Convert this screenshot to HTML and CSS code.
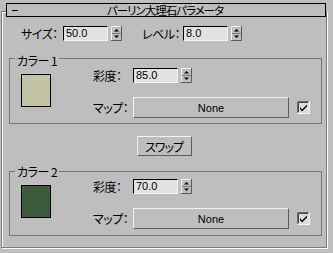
FILE: index.html
```html
<!DOCTYPE html>
<html lang="ja">
<head>
<meta charset="utf-8">
<link rel="stylesheet" href="styles.css">
</head>
<body>
<div class="frame">
  <div class="title"><span class="minus"></span><span class="title-text">パーリン大理石パラメータ</span><span class="spacer"></span></div>
  <div class="top-row">
    <span class="lbl lbl-size">サイズ：</span>
    <div class="num">50.0</div>
    <svg class="spin" viewBox="0 0 11 15" width="11" height="15"><path d="M0.5 14V0.5H10" stroke="#f4f4f4" fill="none"/><path d="M10.5 0V14.5H0" stroke="#5a5a5a" fill="none"/><path d="M1 7.5H10" stroke="#7a7a7a"/><path d="M3 5.5L5.5 3L8 5.5Z" fill="#000"/><path d="M3 9.5H8L5.5 12Z" fill="#000"/></svg>
    <span class="lbl lbl-level">レベル：</span>
    <div class="num">8.0</div>
    <svg class="spin" viewBox="0 0 11 15" width="11" height="15"><path d="M0.5 14V0.5H10" stroke="#f4f4f4" fill="none"/><path d="M10.5 0V14.5H0" stroke="#5a5a5a" fill="none"/><path d="M1 7.5H10" stroke="#7a7a7a"/><path d="M3 5.5L5.5 3L8 5.5Z" fill="#000"/><path d="M3 9.5H8L5.5 12Z" fill="#000"/></svg>
  </div>

  <div class="group group-1">
    <div class="legend">カラー 1</div>
    <div class="group-body">
      <div class="swatch swatch-1"></div>
      <div class="controls">
        <div class="row">
          <span class="lbl lbl-field">彩度：</span>
          <div class="num">85.0</div>
          <svg class="spin" viewBox="0 0 11 15" width="11" height="15"><path d="M0.5 14V0.5H10" stroke="#f4f4f4" fill="none"/><path d="M10.5 0V14.5H0" stroke="#5a5a5a" fill="none"/><path d="M1 7.5H10" stroke="#7a7a7a"/><path d="M3 5.5L5.5 3L8 5.5Z" fill="#000"/><path d="M3 9.5H8L5.5 12Z" fill="#000"/></svg>
        </div>
        <div class="row map-row">
          <span class="lbl lbl-field">マップ：</span>
          <button class="map-btn">None</button>
          <svg class="check" viewBox="0 0 13 13" width="13" height="13"><rect x="0" y="0" width="13" height="13" fill="#dcdcdc"/><path d="M0.5 12V0.5H12" stroke="#6a6a6a" fill="none"/><path d="M12.5 0V12.5H0" stroke="#f4f4f4" fill="none"/><path d="M1.5 11V1.5H11" stroke="#404040" fill="none"/><path d="M3 6L5 8.5L10 3.5V5.5L5 10.5L3 8Z" fill="#000"/></svg>
        </div>
      </div>
    </div>
  </div>

  <div class="swap-wrap"><button class="swap">スワップ</button></div>

  <div class="group group-2">
    <div class="legend">カラー 2</div>
    <div class="group-body">
      <div class="swatch swatch-2"></div>
      <div class="controls">
        <div class="row">
          <span class="lbl lbl-field">彩度：</span>
          <div class="num">70.0</div>
          <svg class="spin" viewBox="0 0 11 15" width="11" height="15"><path d="M0.5 14V0.5H10" stroke="#f4f4f4" fill="none"/><path d="M10.5 0V14.5H0" stroke="#5a5a5a" fill="none"/><path d="M1 7.5H10" stroke="#7a7a7a"/><path d="M3 5.5L5.5 3L8 5.5Z" fill="#000"/><path d="M3 9.5H8L5.5 12Z" fill="#000"/></svg>
        </div>
        <div class="row map-row">
          <span class="lbl lbl-field">マップ：</span>
          <button class="map-btn">None</button>
          <svg class="check" viewBox="0 0 13 13" width="13" height="13"><rect x="0" y="0" width="13" height="13" fill="#dcdcdc"/><path d="M0.5 12V0.5H12" stroke="#6a6a6a" fill="none"/><path d="M12.5 0V12.5H0" stroke="#f4f4f4" fill="none"/><path d="M1.5 11V1.5H11" stroke="#404040" fill="none"/><path d="M3 6L5 8.5L10 3.5V5.5L5 10.5L3 8Z" fill="#000"/></svg>
        </div>
      </div>
    </div>
  </div>
</div>
</body>
</html>
```
FILE: styles.css
```css
html, body {
  margin: 0;
  padding: 0;
  background: #bebebe;
}
body {
  width: 333px;
  height: 253px;
  overflow: hidden;
  font-family: "Liberation Sans", "Noto Sans CJK JP", sans-serif;
  font-size: 11px;
  color: #000;
}
.frame {
  margin: 11px 0 0 1px;
  width: 324px;
  height: 235px;
  border: 1px solid #7b7b7b;
  box-shadow: 1px 1px 0 #fbfbfb, inset 1px 1px 0 #fbfbfb;
}
.title {
  margin: -9px 0 0 4px;
  width: 318px;
  height: 12px;
  border: 1px solid #000;
  background: #bebebe;
  display: flex;
  align-items: center;
}
.minus {
  width: 6px;
  height: 1px;
  background: #000;
  margin-left: 5px;
}
.spacer {
  width: 13px;
}
.title-text {
  flex: 1;
  text-align: center;
  font-family: "Noto Sans CJK JP", sans-serif;
  font-size: 11.5px;
  letter-spacing: -1px;
  line-height: 12px;
  font-feature-settings: "palt";
}
.top-row {
  display: flex;
  align-items: center;
  height: 15px;
  margin-top: 9px;
  padding-left: 19px;
}
.lbl {
  font-family: "Noto Sans CJK JP", sans-serif;
  font-size: 12px;
  letter-spacing: -0.5px;
  line-height: 15px;
  font-feature-settings: "palt";
  white-space: nowrap;
}
.lbl-size { width: 42px; }
.lbl-level { width: 41px; margin-left: 20px; }
.lbl-field { width: 40px; }
.num {
  box-sizing: border-box;
  width: 45px;
  height: 15px;
  border: 1px solid;
  border-color: #000 #f4f4f4 #f4f4f4 #000;
  background: #e2e2e2;
  padding-left: 2px;
  line-height: 13px;
  font-size: 11px;
}
.spin {
  display: block;
  margin-left: 3px;
  flex: none;
}
.group {
  margin: 17px 0 0 7px;
  width: 311px;
  border: 1px solid #767676;
  padding-bottom: 6px;
}
.group-1 {
  padding-top: 2px;
  padding-bottom: 5px;
}
.group-2 {
  margin-top: 15px;
}
.legend {
  display: table;
  margin: -7px 0 -7px 5px;
  padding: 0 2px;
  height: 14px;
  line-height: 14px;
  background: #bebebe;
  font-family: "Noto Sans CJK JP", sans-serif;
  font-size: 12px;
  letter-spacing: -0.5px;
  font-feature-settings: "palt";
}
.group-body {
  display: flex;
  align-items: flex-start;
}
.swatch {
  box-sizing: border-box;
  width: 30px;
  height: 33px;
  border: 1px solid #000;
  margin: 13px 0 0 11px;
}
.swatch-1 { background: #c1c3a2; }
.swatch-2 { background: #3d5a3b; }
.controls {
  margin: 7px 0 0 42px;
}
.row {
  display: flex;
  align-items: center;
  height: 15px;
}
.map-row {
  margin-top: 14px;
  height: 21px;
}
.map-btn {
  box-sizing: border-box;
  width: 156px;
  height: 21px;
  margin: 0;
  padding: 0;
  border: 1px solid;
  border-color: #f2f2f2 #5e5e5e #5e5e5e #f2f2f2;
  background: #bebebe;
  font-family: "Liberation Sans", sans-serif;
  font-size: 11px;
  color: #000;
}
.check {
  display: block;
  margin-left: 8px;
  flex: none;
}
.swap-wrap {
  display: flex;
  justify-content: center;
  margin-top: 12px;
}
.swap {
  box-sizing: border-box;
  width: 55px;
  height: 20px;
  margin: 0;
  padding: 0;
  border: 1px solid;
  border-color: #f2f2f2 #5e5e5e #5e5e5e #f2f2f2;
  background: #bebebe;
  font-family: "Noto Sans CJK JP", sans-serif;
  font-size: 12px;
  letter-spacing: -1px;
  font-feature-settings: "palt";
  color: #000;
}
```
